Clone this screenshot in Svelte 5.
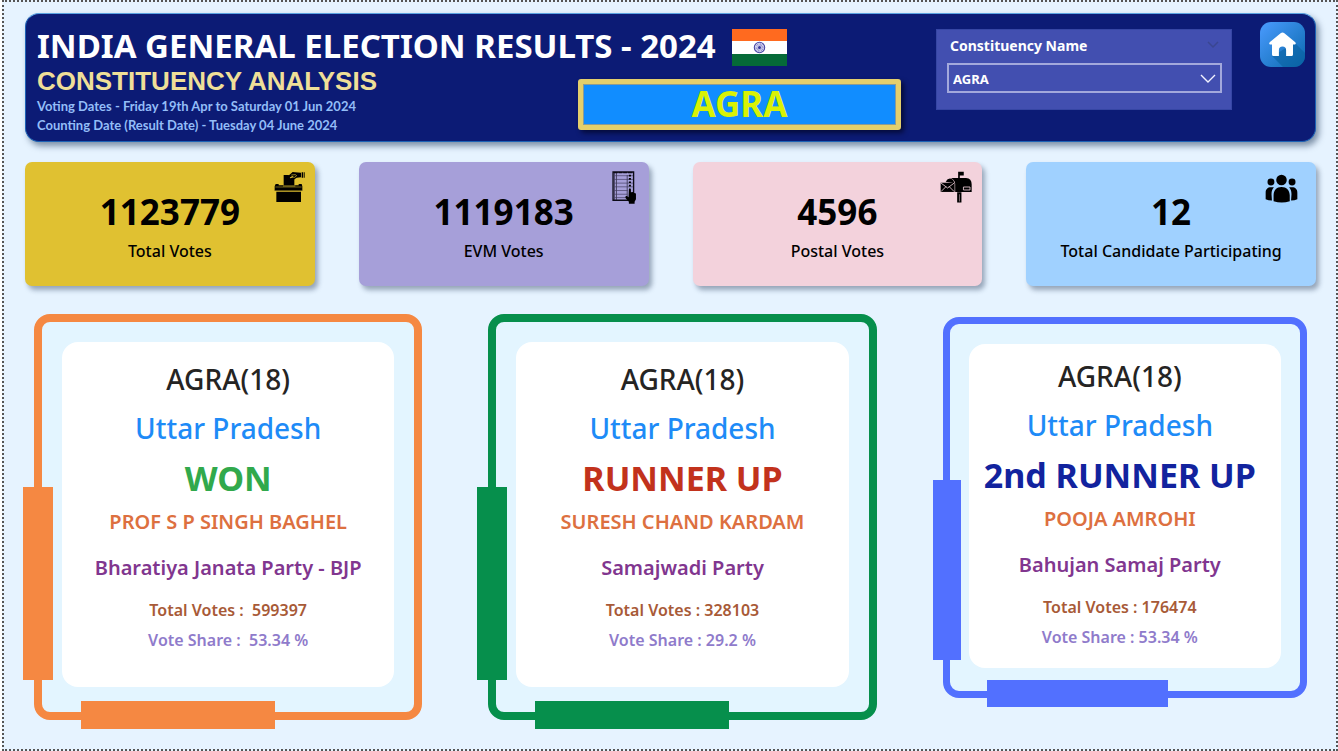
<script>
  let constituency = $state('AGRA');

  const totals = [
    { tone: 'gold', icon: 'ballot', value: '1123779', label: 'Total Votes' },
    { tone: 'violet', icon: 'evm', value: '1119183', label: 'EVM Votes' },
    { tone: 'pink', icon: 'mail', value: '4596', label: 'Postal Votes' },
    { tone: 'sky', icon: 'people', value: '12', label: 'Total Candidate Participating' }
  ];

  const results = [
    { tone: 'first', outcome: 'WON', name: 'PROF S P SINGH BAGHEL', party: 'Bharatiya Janata Party - BJP', votes: '\u00a0599397', share: '\u00a053.34 %' },
    { tone: 'second', outcome: 'RUNNER UP', name: 'SURESH CHAND KARDAM', party: 'Samajwadi Party', votes: '328103', share: '29.2 %' },
    { tone: 'third', outcome: '2nd RUNNER UP', name: 'POOJA AMROHI', party: 'Bahujan Samaj Party', votes: '176474', share: '53.34 %' }
  ];
</script>

<main class="page">
  <header class="banner">
    <div class="heading">
      <div class="title-row">
        <h1>INDIA GENERAL ELECTION RESULTS - 2024</h1>
        <svg class="flag" viewBox="0 0 55 37" role="img" aria-label="Flag of India">
          <rect width="55" height="37" fill="#fff" />
          <rect width="55" height="12" fill="#ff6a1f" />
          <rect y="25" width="55" height="12" fill="#056a38" />
          <circle cx="27.5" cy="18.5" r="5.2" fill="#e4e4f6" stroke="#4a48a5" stroke-width="1.1" />
          <circle cx="27.5" cy="18.5" r="3" fill="none" stroke="#8b8acb" stroke-width="2.6" stroke-dasharray="0.7 0.6" />
          <circle cx="27.5" cy="18.5" r="1.5" fill="#35339a" />
        </svg>
      </div>
      <div class="sub-row">
        <div class="notes">
          <h2>CONSTITUENCY ANALYSIS</h2>
          <p>Voting Dates - Friday 19th Apr to Saturday 01 Jun 2024</p>
          <p>Counting Date (Result Date) - Tuesday 04 June 2024</p>
        </div>
        <div class="selected">{constituency}</div>
      </div>
    </div>

    <div class="slicer">
      <div class="slicer-head">
        <label for="constituency">Constituency Name</label>
        <svg width="12" height="8" viewBox="0 0 12 8" fill="none" stroke="#3a4691" stroke-width="1.5"><path d="M1 1l5 5 5-5" /></svg>
      </div>
      <div class="select-wrap">
        <select id="constituency" bind:value={constituency}>
          <option>AGRA</option>
        </select>
        <svg class="chevron" width="16" height="10" viewBox="0 0 16 10" fill="none" stroke="#f2f3ff" stroke-width="1.4"><path d="M1 1l7 7 7-7" /></svg>
      </div>
    </div>

    <button class="home" aria-label="Home">
      <svg viewBox="0 0 45 45">
        <defs>
          <linearGradient id="home-bg" x1="0" y1="0" x2="1" y2="1">
            <stop offset="0" stop-color="#4a9bff" />
            <stop offset="1" stop-color="#0a69ad" />
          </linearGradient>
        </defs>
        <rect width="45" height="45" rx="11" fill="url(#home-bg)" />
        <path d="M35 21 45 31V34a11 11 0 0 1-11 11H23L12 34z" fill="#075f9c" opacity=".55" />
        <path d="M20.600 11.200a3 3 0 0 1 3.800 0L35 20c1.400 1.300.8 2.500-.8 2.500H33v9.700c0 1.200-.7 1.900-1.900 1.900h-5V28a3.500 3.500 0 0 0-7.200 0v6.100h-5c-1.200 0-1.900-.7-1.900-1.900v-9.700h-1.200c-1.600 0-2.200-1.200-.8-2.500z" fill="#fff" />
      </svg>
    </button>
  </header>

  <section class="totals">
    {#each totals as item}
      <article class="total {item.tone}">
        {#if item.icon === 'ballot'}
          <svg class="icon" width="31" height="31" viewBox="28 48 93 93" aria-hidden="true">
            <path d="M57 60h15l5 10 8-2 4 2v22H57z" />
            <path d="M71 62 84 51l7 1 18 1v14l-13 1-9 6-8-1-1-3 8-4-3-3-9 5z" />
            <path d="M80 60l12-1 4 3-6 5-8-1" fill="none" stroke="#e0c131" stroke-width="2" />
            <path d="M111 52h4v16h-4zM117 52h3v16h-3zM33 87h9v4h60v-4h9l2 7v13H30V94z" />
            <path d="M35 110h74v31H35z" />
            <path d="M32 96h79M31 108h81" stroke="#e0c131" stroke-width="2" opacity=".75" />
            <path d="M55 93h37" stroke="#e0c131" stroke-width="2" />
          </svg>
        {:else if item.icon === 'evm'}
          <svg class="icon" width="24" height="33" viewBox="35 46 71 98" aria-hidden="true">
            <path d="M38 49h61v84H38z" fill="none" stroke="#0c0a16" stroke-width="4" />
            <path d="M48 50v82M42 50v82M80 58v72" stroke="#1b182b" stroke-width="2" />
            <path d="M40 51h58" stroke="#0c0a16" stroke-width="4" stroke-dasharray="12 2" />
            <path d="M42 60h55M42 71h55M42 82h55M42 93h55M42 104h40M42 115h38M42 125h38" stroke="#423b60" stroke-width="2" />
            <path d="M85 57h6v5h-6zM85 67h6v5h-6zM85 77h6v5h-6zM85 87h6v5h-6z" />
            <path d="M85 100q3-6 6 0v9l6-1 4 3 5 2v17l-4 7v6H85v-6l-10-11q-2-7 4-6l5 4z" />
          </svg>
        {:else if item.icon === 'mail'}
          <svg class="icon" width="32" height="32" viewBox="34 46 97 96" aria-hidden="true">
            <path d="M89 48h17v11H94v14h-5zM86 110h13v31H86z" />
            <path d="M67 67h46q17 1 17 19v23H80V84q-2-12-13-17z" />
            <path d="M51 78q7-12 17-9 9 3 9 16v24h-5V81z" />
            <path d="M36 81h42v28H36z" />
            <path d="M37 82l20 15 20-15M37 108l15-15M77 108 62 93" fill="none" stroke="#f3d2dc" stroke-width="2.500" />
            <path d="M105 94h20v9h-20z" fill="none" stroke="#f3d2dc" stroke-width="2.500" />
            <path d="M93 116v22" stroke="#f3d2dc" stroke-width="1.500" />
          </svg>
        {:else}
          <svg class="icon" width="33" height="29" viewBox="43 55 100 87" aria-hidden="true">
            <circle cx="93" cy="73" r="16" />
            <circle cx="61" cy="79" r="10.500" />
            <circle cx="125" cy="79" r="10.500" />
            <path d="M69 137v-17c0-16 9-26 24-26s25 10 25 26v17q-24 8-49 0zM45 131v-20c0-10 6-16 16-16h9c-6 7-8 15-7 25l1 15q-11 0-19-4zM141 131v-20c0-10-6-16-16-16h-9c6 7 8 15 7 25l-1 15q11 0 19-4z" />
          </svg>
        {/if}
        <strong>{item.value}</strong>
        <span>{item.label}</span>
      </article>
    {/each}
  </section>

  <section class="results">
    {#each results as r}
      <article class="frame {r.tone}">
        <div class="sheet">
          <p class="seat">{constituency}(18)</p>
          <p class="state">Uttar Pradesh</p>
          <p class="outcome">{r.outcome}</p>
          <p class="name">{r.name}</p>
          <p class="party">{r.party}</p>
          <p class="votes">Total Votes : {r.votes}</p>
          <p class="share">Vote Share : {r.share}</p>
        </div>
      </article>
    {/each}
  </section>
</main>

<style>
  :global(body) {
    background: #fff;
  }
  * {
    box-sizing: border-box;
  }
  h1, h2, p {
    margin: 0;
  }
  .page {
    min-height: 100vh;
    padding: 11px 20px 19px 21px;
    border: 2px dotted #555;
    margin: 0 0 0 2px;
    background: #e6f3ff;
    font-family: "Noto Sans", "Open Sans", sans-serif;
    font-weight: 500;
  }

  .banner {
    display: flex;
    align-items: flex-start;
    min-height: 129px;
    padding: 8px 10px 4px 11px;
    border: 1px solid #1d62b5;
    border-top-color: #5ba4e2;
    border-radius: 14px;
    background: #0c1b75;
    box-shadow: 3px 4px 6px rgba(20, 45, 80, 0.5);
  }
  .heading {
    flex: 1;
    padding-top: 7px;
  }
  .title-row {
    display: flex;
    align-items: flex-start;
    gap: 16px;
    height: 37px;
  }
  h1 {
    color: #fff;
    font-size: 33px;
    line-height: 34px;
    font-weight: 700;
    white-space: nowrap;
  }
  .flag {
    width: 55px;
    height: 37px;
    flex: none;
  }
  .sub-row {
    display: flex;
    justify-content: space-between;
    align-items: flex-end;
  }
  h2 {
    color: #efdf98;
    font: 700 26px/31px "Liberation Sans", Arial, sans-serif;
  }
  .notes p {
    color: #93bdf8;
    font: 700 13px/19px Lato, sans-serif;
  }
  .selected {
    width: 323px;
    height: 51px;
    margin-bottom: 5px;
    border: 5px solid #e4cf6c;
    border-radius: 3px;
    outline: 1px solid #8b9b94;
    outline-offset: -6px;
    background: #118dff;
    box-shadow: 3px 3px 5px rgba(0, 0, 20, 0.6);
    color: #d9f205;
    font-size: 35px;
    font-weight: 700;
    line-height: 40px;
    text-align: center;
  }
  .slicer {
    width: 296px;
    height: 81px;
    margin: 7px 28px 0 35px;
    padding: 5px 9px 0 10px;
    border: 1px solid #3646a4;
    background: #424fb0;
    color: #fff;
  }
  .slicer-head {
    display: flex;
    align-items: center;
    justify-content: space-between;
    height: 20px;
    padding: 0 3px;
    font: 700 14px "Noto Sans", sans-serif;
  }
  .select-wrap {
    position: relative;
    margin-top: 8px;
  }
  select {
    display: block;
    width: 100%;
    height: 30px;
    padding: 2px 4px 0;
    appearance: none;
    border: 2px solid #a3a9dc;
    border-radius: 0;
    background: transparent;
    color: #fff;
    font: 700 13px "Noto Sans", sans-serif;
  }
  .chevron {
    position: absolute;
    right: 6px;
    top: 11px;
    pointer-events: none;
  }
  .home {
    width: 45px;
    height: 45px;
    padding: 0;
    border: 0;
    background: none;
    cursor: pointer;
  }
  .home svg {
    display: block;
  }

  .totals {
    display: grid;
    grid-template-columns: repeat(4, 1fr);
    gap: 44px;
    margin-top: 20px;
  }
  .total {
    position: relative;
    display: flex;
    flex-direction: column;
    align-items: center;
    gap: 6px;
    padding: 28px 0 24px;
    border-radius: 7px;
    box-shadow: 3px 4px 5px rgba(30, 50, 80, 0.4);
    color: #000;
  }
  .total strong {
    font-size: 35px;
    line-height: 44px;
    font-weight: 700;
  }
  .total span {
    font-size: 16px;
    line-height: 22px;
  }
  .icon {
    position: absolute;
    top: 9px;
    right: 10px;
  }
  .gold { background: #e0c131; }
  .violet { background: #a69fd9; }
  .pink { background: #f3d2dc; }
  .sky { background: #a0d1ff; }
  .violet .icon { right: 13px; }
  .sky .icon { right: 18px; top: 12px; }

  .results {
    display: grid;
    grid-template-columns: 388fr 388fr 364fr;
    align-items: start;
    gap: 66px;
    margin: 28px 9px 0;
  }
  .frame {
    position: relative;
    padding: 20px 20px 25px;
    border: 8px solid var(--tone);
    border-radius: 16px;
    background: #e3f5ff;
    text-align: center;
  }
  .frame::before,
  .frame::after {
    content: "";
    position: absolute;
    background: var(--tone);
  }
  .frame::before {
    left: -19px;
    top: 165px;
    width: 30px;
    height: 193px;
  }
  .frame::after {
    left: 39px;
    bottom: -17px;
    width: 194px;
    height: 28px;
  }
  .sheet {
    padding: 13px 0 32px;
    border-radius: 16px;
    background: #fff;
    white-space: nowrap;
  }
  .seat {
    color: #252423;
    font-size: 28px;
    line-height: 48px;
  }
  .state {
    color: #1e8bf7;
    font-size: 28px;
    line-height: 50px;
  }
  .outcome {
    color: var(--outcome);
    font-size: 34px;
    line-height: 50px;
    font-weight: 700;
  }
  .name {
    color: #dd7040;
    font-size: 20px;
    line-height: 38px;
    font-weight: 600;
  }
  .party {
    color: #81368f;
    font-size: 20px;
    line-height: 54px;
    font-weight: 600;
  }
  .votes {
    color: #a85a37;
    font-size: 16px;
    line-height: 30px;
    font-weight: 600;
  }
  .share {
    color: #8f7bcb;
    font-size: 16px;
    line-height: 30px;
    font-weight: 600;
  }
  .first { --tone: #f58842; --outcome: #31a94c; }
  .second { --tone: #068f4c; --outcome: #c2321c; }
  .third {
    --tone: #5270ff;
    --outcome: #12239e;
    margin-top: 3px;
    padding: 20px 19px 23px;
    border-width: 7px;
  }
  .third::before {
    left: -17px;
    top: 156px;
    width: 28px;
    height: 180px;
  }
  .third::after {
    left: 37px;
    bottom: -16px;
    width: 181px;
    height: 27px;
  }
  .third .sheet {
    padding: 8px 10px 16px 0;
  }
</style>
